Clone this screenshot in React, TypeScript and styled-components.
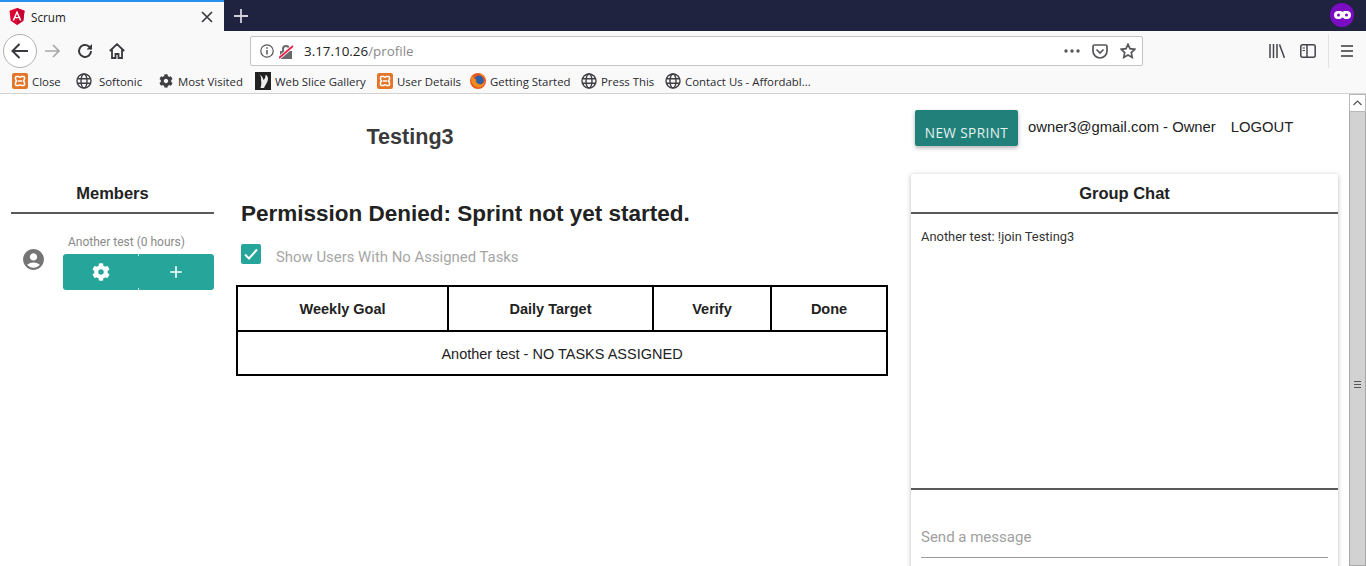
import React from 'react';
import styled, { createGlobalStyle } from 'styled-components';
import { FaCog } from 'react-icons/fa';
import { MdAccountCircle, MdAdd } from 'react-icons/md';

const GlobalStyle = createGlobalStyle`
  html, body {
    margin: 0;
    height: 566px;
    overflow: hidden;
    background: #fff;
    font-family: "Liberation Sans", Arial, sans-serif;
  }
  * { box-sizing: border-box; }
`;

const Screen = styled.div`
  width: 1366px;
  height: 566px;
  display: flex;
  flex-direction: column;
  overflow: hidden;
`;

const TabStrip = styled.div`
  height: 31px;
  flex: none;
  display: flex;
  align-items: stretch;
  background: #202340;
`;

const Tab = styled.div`
  width: 224px;
  display: flex;
  align-items: center;
  padding: 0 11px 0 9px;
  background: #f9f9fa;
  border-top: 2px solid #2a90ee;
  color: #1a1a1a;
  font: 11.7px "Open Sans", sans-serif;
  gap: 6px;
`;

const TabTitle = styled.span`
  flex: 1;
`;

const NewTab = styled.div`
  width: 34px;
  display: flex;
  align-items: center;
  justify-content: center;
`;

const StripSpacer = styled.div`
  flex: 1;
`;

const MaskBadge = styled.div`
  width: 24px;
  height: 24px;
  margin: 3px 12px 0 0;
  border-radius: 50%;
  background: #7a0cc4;
  display: flex;
  align-items: center;
  justify-content: center;
`;

const NavBar = styled.div`
  height: 38px;
  flex: none;
  display: flex;
  align-items: center;
  background: #f9f9fa;
  padding: 2px 0 0 3px;
`;

const BackCircle = styled.div`
  width: 34px;
  height: 34px;
  border: 1px solid #b1b1b3;
  border-radius: 50%;
  background: #fff;
  display: flex;
  align-items: center;
  justify-content: center;
`;

const NavIcon = styled.div<{ $gap: number }>`
  width: 16px;
  height: 16px;
  margin-left: ${(p) => p.$gap}px;
  display: flex;
`;

const UrlBar = styled.div`
  width: 893px;
  height: 30px;
  margin-left: 125px;
  display: flex;
  align-items: center;
  background: #fff;
  border: 1px solid #c4c4c4;
  border-radius: 2px;
  padding: 0 6px 0 9px;
  font: 13.4px "Open Sans", sans-serif;
`;

const UrlHost = styled.span`
  margin-left: 10px;
  color: #222;
`;

const UrlPath = styled.span`
  color: #8a8a8c;
  flex: 1;
`;

const UrlActions = styled.div`
  display: flex;
  align-items: center;
  gap: 12px;
`;

const ToolIcons = styled.div`
  display: flex;
  align-items: center;
  margin-left: 126px;
  gap: 15px;
`;

const ToolDivider = styled.div`
  width: 1px;
  height: 34px;
  background: #e3e3e5;
  margin: 0 11px 0 -3px;
`;

const BookmarkBar = styled.div`
  height: 25px;
  flex: none;
  display: flex;
  align-items: center;
  background: #f9f9fa;
  border-bottom: 1px solid #d2d2d4;
  padding: 0 0 0 12px;
  gap: 12px;
  font: 11.4px "Open Sans", sans-serif;
  color: #2a2a2e;
`;

const Bookmark = styled.div<{ $lead: number; $gap: number }>`
  display: flex;
  align-items: center;
  gap: ${(p) => p.$gap}px;
  margin-left: ${(p) => p.$lead}px;
  white-space: nowrap;
`;

const BookmarkLabel = styled.span<{ $width: number }>`
  width: ${(p) => p.$width}px;
`;

const Viewport = styled.div`
  flex: 1;
  display: flex;
  min-height: 0;
`;

const Page = styled.div`
  flex: 1;
  min-width: 0;
  background: #fff;
`;

const Header = styled.header`
  height: 80px;
  display: flex;
  align-items: flex-start;
`;

const ProjectTitle = styled.h1`
  width: 820px;
  margin: 30px 0 0;
  text-align: center;
  font-size: 21.6px;
  line-height: 26px;
  font-weight: 700;
  color: #3a3a3a;
`;

const NewSprintButton = styled.button`
  width: 103px;
  height: 36px;
  margin: 16px 0 0 95px;
  padding: 8px 0 0;
  border: 0;
  border-radius: 2px;
  background: #21807a;
  color: #e6f3f1;
  font: 13.6px "Open Sans", sans-serif;
  letter-spacing: 0.4px;
  box-shadow: 0 2px 4px rgba(0, 0, 0, 0.3);
`;

const UserText = styled.span`
  margin: 24px 0 0 10px;
  font-size: 14.8px;
  line-height: 18px;
  color: #222;
`;

const LogoutText = styled(UserText)`
  margin-left: 15px;
`;

const Columns = styled.div`
  display: flex;
  padding-left: 11px;
  gap: 23px;
  align-items: flex-start;
`;

const Sidebar = styled.aside`
  width: 203px;
  flex: none;
`;

const PanelTitle = styled.h3`
  height: 40px;
  margin: 0;
  border-bottom: 2px solid #5a5a5a;
  text-align: center;
  font-size: 16.5px;
  line-height: 38px;
  font-weight: 700;
  color: #222;
`;

const MemberRow = styled.div`
  display: flex;
  align-items: center;
  margin-top: 21px;
`;

const MemberAvatar = styled.div`
  width: 52px;
  flex: none;
  padding: 0 0 7px 10px;
  color: #757575;
  display: flex;
`;

const MemberBody = styled.div`
  flex: 1;
`;

const MemberName = styled.div`
  font: 12px/14px Roboto, sans-serif;
  color: #8a8a8a;
  padding-left: 5px;
  margin-bottom: 5px;
`;

const MemberActions = styled.div`
  display: flex;
  height: 36px;
  border-radius: 3px;
  overflow: hidden;
`;

const MemberAction = styled.div`
  position: relative;
  flex: 1;
  display: flex;
  align-items: center;
  justify-content: center;
  background: #26a69a;
  color: #fff;

  & + &::before,
  & + &::after {
    content: '';
    position: absolute;
    left: -1px;
    width: 1px;
    height: 2px;
    background: #d8efec;
  }
  & + &::before {
    top: 0;
  }
  & + &::after {
    bottom: 0;
  }
`;

const Center = styled.main`
  width: 652px;
  flex: none;
  margin-left: -1px;
`;

const Notice = styled.h2`
  margin: 26px 0 0 5px;
  font-size: 22.5px;
  line-height: 27px;
  font-weight: 700;
  color: #222;
`;

const FilterRow = styled.label`
  display: flex;
  align-items: center;
  margin: 17px 0 0 5px;
  height: 20px;
`;

const CheckBox = styled.span`
  width: 20px;
  height: 20px;
  border-radius: 2px;
  background: #26a69a;
  display: flex;
  align-items: center;
  justify-content: center;
`;

const FilterLabel = styled.span`
  margin-left: 15px;
  padding-top: 5px;
  font: 14.9px Roboto, sans-serif;
  color: #a6a6a6;
`;

const BoardTable = styled.table`
  width: 650px;
  margin-top: 21px;
  border-collapse: collapse;
  table-layout: fixed;
  border: 2px solid #000;
  font-size: 14.5px;
  color: #222;

  th, td {
    border: 2px solid #000;
    text-align: center;
    padding: 0;
  }
  th {
    height: 45px;
    font-weight: 700;
  }
  td {
    height: 44px;
    padding-top: 1px;
    font-weight: 400;
  }
`;

const ChatCard = styled.section`
  width: 427px;
  height: 400px;
  flex: none;
  background: #fff;
  border-radius: 2px;
  box-shadow: 0 1px 5px rgba(0, 0, 0, 0.28);
`;

const ChatMessages = styled.div`
  height: 276px;
  padding: 15px 10px;
  border-bottom: 2px solid #5a5a5a;
  font: 12.9px/16px Roboto, sans-serif;
  color: #333;
`;

const ChatInput = styled.div`
  margin: 28px 10px 0;
  height: 40px;
  border-bottom: 1px solid #9a9a9a;
  font: 15px/38px Roboto, sans-serif;
  color: #a0a0a0;
`;

const ScrollBar = styled.div`
  width: 17px;
  flex: none;
  display: flex;
  flex-direction: column;
  background: #f1f1f1;
`;

const ScrollArrow = styled.div`
  height: 18px;
  background: #fff;
  border: 1px solid #b8b8b8;
  display: flex;
  align-items: center;
  justify-content: center;
`;

const ScrollThumb = styled.div`
  flex: 1;
  padding-top: 269px;
  background: #d2d2d2;
  border: 1px solid #a8a8a8;
  border-top: 0;
  display: flex;
  align-items: flex-start;
  justify-content: center;
`;

const AngularIcon = () => (
  <svg width="16" height="17" viewBox="0 0 16 17">
    <path d="M8 0 .5 2.7l1.2 10L8 17l6.3-4.3 1.2-10z" fill="#dd0031" />
    <path d="M8 0v17l6.3-4.3 1.2-10z" fill="#c3002f" />
    <path d="M8 2.5 3.5 12.6h1.7l.9-2.3h3.8l.9 2.3h1.7zm1.3 6.4H6.7L8 5.8z" fill="#fff" />
  </svg>
);

const XamppIcon = () => (
  <svg width="16" height="16" viewBox="0 0 16 16">
    <rect width="16" height="16" rx="2" fill="#e4762c" />
    <path d="M4.500 3.500h2c.8 0 1 .8 1.500.8s.7-.8 1.500-.8h2c.6 0 1 .4 1 1v1.700c0 .9-1.200 1.300-1.200 1.800s1.200.9 1.200 1.800v1.700c0 .6-.4 1-1 1h-2c-.8 0-1-.8-1.500-.8s-.7.8-1.500.8h-2c-.6 0-1-.4-1-1V9.800c0-.9 1.200-1.300 1.200-1.800S3.500 7.100 3.500 6.200V4.500c0-.6.4-1 1-1z" fill="none" stroke="#fff" strokeWidth="1.500" />
    <path d="M6 8h4" stroke="#fff" strokeWidth="1.500" />
  </svg>
);

const GlobeIcon = () => (
  <svg width="16" height="16" viewBox="0 0 16 16" fill="none" stroke="#3f3f44" strokeWidth="1.4">
    <circle cx="8" cy="8" r="7" />
    <ellipse cx="8" cy="8" rx="3" ry="7" />
    <path d="M1 5.700h14M1 10.300h14" />
  </svg>
);

const GearIcon = () => (
  <span style={{ display: 'flex', color: '#3f3f44' }}>
    <FaCog size={14} />
  </span>
);

const WebSliceIcon = () => (
  <svg width="16" height="18" viewBox="0 0 16 18">
    <rect width="16" height="18" fill="#222" />
    <path d="M3 2c3 1 3.500 4 3 6 .5 2 .5 5-.5 8h3.500c1-3 4-6 4-9 0-2-1-4-2.500-4 0 3-1 4-2 5-.5-3-2.500-5-5.500-6z" fill="#eee" />
  </svg>
);

const FirefoxIcon = () => (
  <svg width="16" height="16" viewBox="0 0 16 16">
    <circle cx="8" cy="8" r="8" fill="#e8561f" />
    <circle cx="9" cy="7.200" r="4.600" fill="#2c5fa8" />
    <path d="M1 6c0 6 5 9 9 8.400 3-.6 5-3.400 5-6.400-1 3-4 4-6.500 3C6 10 5.500 8 6.500 6.500 4 6 3 4.500 3.400 2.500 2 3.500 1.200 4.600 1 6z" fill="#f08a1d" />
    <path d="M9 .2c3 .4 6 3 6.600 6.400C14.500 4 12 2 9 .2z" fill="#f6b11e" />
  </svg>
);

const bookmarks: { label: string; icon: React.ReactNode; lead: number; gap: number; width: number }[] = [
  { label: 'Close', icon: <XamppIcon />, lead: 0, gap: 4, width: 29 },
  { label: 'Softonic', icon: <GlobeIcon />, lead: 3, gap: 7, width: 44 },
  { label: 'Most Visited', icon: <GearIcon />, lead: 4, gap: 5, width: 65 },
  { label: 'Web Slice Gallery', icon: <WebSliceIcon />, lead: 0, gap: 4, width: 90 },
  { label: 'User Details', icon: <XamppIcon />, lead: 0, gap: 4, width: 61 },
  { label: 'Getting Started', icon: <FirefoxIcon />, lead: 0, gap: 4, width: 79 },
  { label: 'Press This', icon: <GlobeIcon />, lead: 0, gap: 4, width: 52 },
  { label: 'Contact Us - Affordabl...', icon: <GlobeIcon />, lead: 0, gap: 4, width: 128 },
];

const App = () => {
  return (
    <Screen>
      <GlobalStyle />
      <TabStrip>
        <Tab>
          <AngularIcon />
          <TabTitle>Scrum</TabTitle>
          <svg width="12" height="12" viewBox="0 0 12 12" stroke="#3a3a3e" strokeWidth="1.7">
            <path d="M1 1l10 10M11 1 1 11" />
          </svg>
        </Tab>
        <NewTab>
          <svg width="14" height="14" viewBox="0 0 14 14" stroke="#d0d1da" strokeWidth="1.8">
            <path d="M7 0v14M0 7h14" />
          </svg>
        </NewTab>
        <StripSpacer />
        <MaskBadge>
          <svg width="17" height="8" viewBox="0 0 17 8">
            <path d="M4 0h2.500c1 0 1.400.8 2 .8S9.500 0 10.500 0H13c2.500 0 4 1.500 4 4s-1.500 4-4 4h-2c-1 0-1.500-1.500-2.500-1.500S7 8 6 8H4C1.500 8 0 6.500 0 4s1.500-4 4-4z" fill="#fff" />
            <circle cx="4.500" cy="4" r="1.500" fill="#7a0cc4" />
            <circle cx="12.500" cy="4" r="1.500" fill="#7a0cc4" />
          </svg>
        </MaskBadge>
      </TabStrip>

      <NavBar>
        <BackCircle>
          <svg width="18" height="16" viewBox="0 0 18 16" fill="none" stroke="#38383d" strokeWidth="2">
            <path d="M17 8H2M8.500 1 1.500 8l7 7" />
          </svg>
        </BackCircle>
        <NavIcon $gap={8}>
          <svg width="16" height="16" viewBox="0 0 16 16" fill="none" stroke="#a8a8aa" strokeWidth="1.7">
            <path d="M0 8h14M8 2l6 6-6 6" />
          </svg>
        </NavIcon>
        <NavIcon $gap={16}>
          <svg width="16" height="16" viewBox="0 0 16 16" fill="none" stroke="#38383d" strokeWidth="2">
            <path d="M14 8a6 6 0 1 1-2-4.500L14.500 6" />
            <path d="M15 1v5.500H9.500" fill="#38383d" stroke="none" />
          </svg>
        </NavIcon>
        <NavIcon $gap={16}>
          <svg width="16" height="16" viewBox="0 0 16 16" fill="none" stroke="#38383d" strokeWidth="1.8">
            <path d="M.8 8 8 1.200 15.200 8M3 6.500V15h3.500v-4h3v4H13V6.500" />
          </svg>
        </NavIcon>
        <UrlBar>
          <svg width="14" height="14" viewBox="0 0 14 14" fill="none" stroke="#55555a" strokeWidth="1.200">
            <circle cx="7" cy="7" r="6.200" />
            <path d="M7 6v4.500M7 3.200v1.500" strokeWidth="1.500" />
          </svg>
          <svg style={{ marginLeft: 5 }} width="15" height="15" viewBox="0 0 15 15">
            <path d="M3 7V5a4 4 0 0 1 8 0v2h2v8H1V7zm2 0h4V5a2 2 0 0 0-4 0z" fill="#6a6a6e" />
            <path d="M0 14 14 2" stroke="#fff" strokeWidth="3.500" />
            <path d="M0 14 14 2" stroke="#e8224e" strokeWidth="1.800" />
          </svg>
          <UrlHost>3.17.10.26</UrlHost>
          <UrlPath>/profile</UrlPath>
          <UrlActions>
            <svg width="16" height="4" viewBox="0 0 16 4" fill="#55555a">
              <circle cx="2" cy="2" r="1.700" />
              <circle cx="8" cy="2" r="1.700" />
              <circle cx="14" cy="2" r="1.700" />
            </svg>
            <svg width="16" height="15" viewBox="0 0 16 15" fill="none" stroke="#55555a" strokeWidth="1.700">
              <path d="M2.500 1h11c.8 0 1.500.7 1.500 1.500V7a7 7 0 0 1-14 0V2.500C1 1.700 1.700 1 2.500 1z" />
              <path d="M4.500 5.500 8 9l3.500-3.500" />
            </svg>
            <svg width="16" height="16" viewBox="0 0 16 16" fill="none" stroke="#55555a" strokeWidth="1.700">
              <path d="M8 1.300l2 4.400 4.800.6-3.500 3.300.9 4.800L8 12l-4.200 2.400.9-4.800L1.200 6.300 6 5.700z" />
            </svg>
          </UrlActions>
        </UrlBar>
        <ToolIcons>
          <svg width="16" height="14" viewBox="0 0 16 14" stroke="#44444a" strokeWidth="1.500">
            <path d="M1 0v14M4.500 0v14M8 0v14M10.500.5 15.500 14" />
          </svg>
          <svg width="16" height="14" viewBox="0 0 16 14" fill="none" stroke="#44444a" strokeWidth="1.500">
            <rect x=".8" y=".8" width="14.400" height="12.400" rx="2" />
            <path d="M7 1v12" />
            <path d="M2.500 4H5M2.500 6.500H5" strokeWidth="1.200" />
          </svg>
          <ToolDivider />
        </ToolIcons>
        <svg width="14" height="12" viewBox="0 0 14 12" stroke="#38383d" strokeWidth="1.700">
          <path d="M1 1h12M1 6h12M1 11h12" />
        </svg>
      </NavBar>

      <BookmarkBar>
        {bookmarks.map((bookmark) => (
          <Bookmark key={bookmark.label} $lead={bookmark.lead} $gap={bookmark.gap}>
            {bookmark.icon}
            <BookmarkLabel $width={bookmark.width}>{bookmark.label}</BookmarkLabel>
          </Bookmark>
        ))}
      </BookmarkBar>

      <Viewport>
        <Page>
          <Header>
            <ProjectTitle>Testing3</ProjectTitle>
            <NewSprintButton>NEW SPRINT</NewSprintButton>
            <UserText>owner3@gmail.com - Owner</UserText>
            <LogoutText>LOGOUT</LogoutText>
          </Header>
          <Columns>
            <Sidebar>
              <PanelTitle>Members</PanelTitle>
              <MemberRow>
                <MemberAvatar>
                  <MdAccountCircle size={25} />
                </MemberAvatar>
                <MemberBody>
                  <MemberName>Another test (0 hours)</MemberName>
                  <MemberActions>
                    <MemberAction>
                      <FaCog size={18} />
                    </MemberAction>
                    <MemberAction>
                      <MdAdd size={20} />
                    </MemberAction>
                  </MemberActions>
                </MemberBody>
              </MemberRow>
            </Sidebar>
            <Center>
              <Notice>Permission Denied: Sprint not yet started.</Notice>
              <FilterRow>
                <CheckBox>
                  <svg width="14" height="12" viewBox="0 0 14 12" fill="none" stroke="#fff" strokeWidth="2">
                    <path d="M1 6.500 5 10.500 13 1.500" />
                  </svg>
                </CheckBox>
                <FilterLabel>Show Users With No Assigned Tasks</FilterLabel>
              </FilterRow>
              <BoardTable>
                <colgroup>
                  <col style={{ width: 211 }} />
                  <col style={{ width: 205 }} />
                  <col style={{ width: 118 }} />
                  <col style={{ width: 116 }} />
                </colgroup>
                <thead>
                  <tr>
                    <th>Weekly Goal</th>
                    <th>Daily Target</th>
                    <th>Verify</th>
                    <th>Done</th>
                  </tr>
                </thead>
                <tbody>
                  <tr>
                    <td colSpan={4}>Another test - NO TASKS ASSIGNED</td>
                  </tr>
                </tbody>
              </BoardTable>
            </Center>
            <ChatCard>
              <PanelTitle>Group Chat</PanelTitle>
              <ChatMessages>Another test: !join Testing3</ChatMessages>
              <ChatInput>Send a message</ChatInput>
            </ChatCard>
          </Columns>
        </Page>
        <ScrollBar>
          <ScrollArrow>
            <svg width="9" height="6" viewBox="0 0 9 6" fill="none" stroke="#555" strokeWidth="1.200">
              <path d="M.5 5 4.500 1l4 4" />
            </svg>
          </ScrollArrow>
          <ScrollThumb>
            <svg width="7" height="7" viewBox="0 0 7 7" stroke="#555">
              <path d="M0 .5h7M0 3.500h7M0 6.500h7" />
            </svg>
          </ScrollThumb>
        </ScrollBar>
      </Viewport>
    </Screen>
  );
};

export default App;
